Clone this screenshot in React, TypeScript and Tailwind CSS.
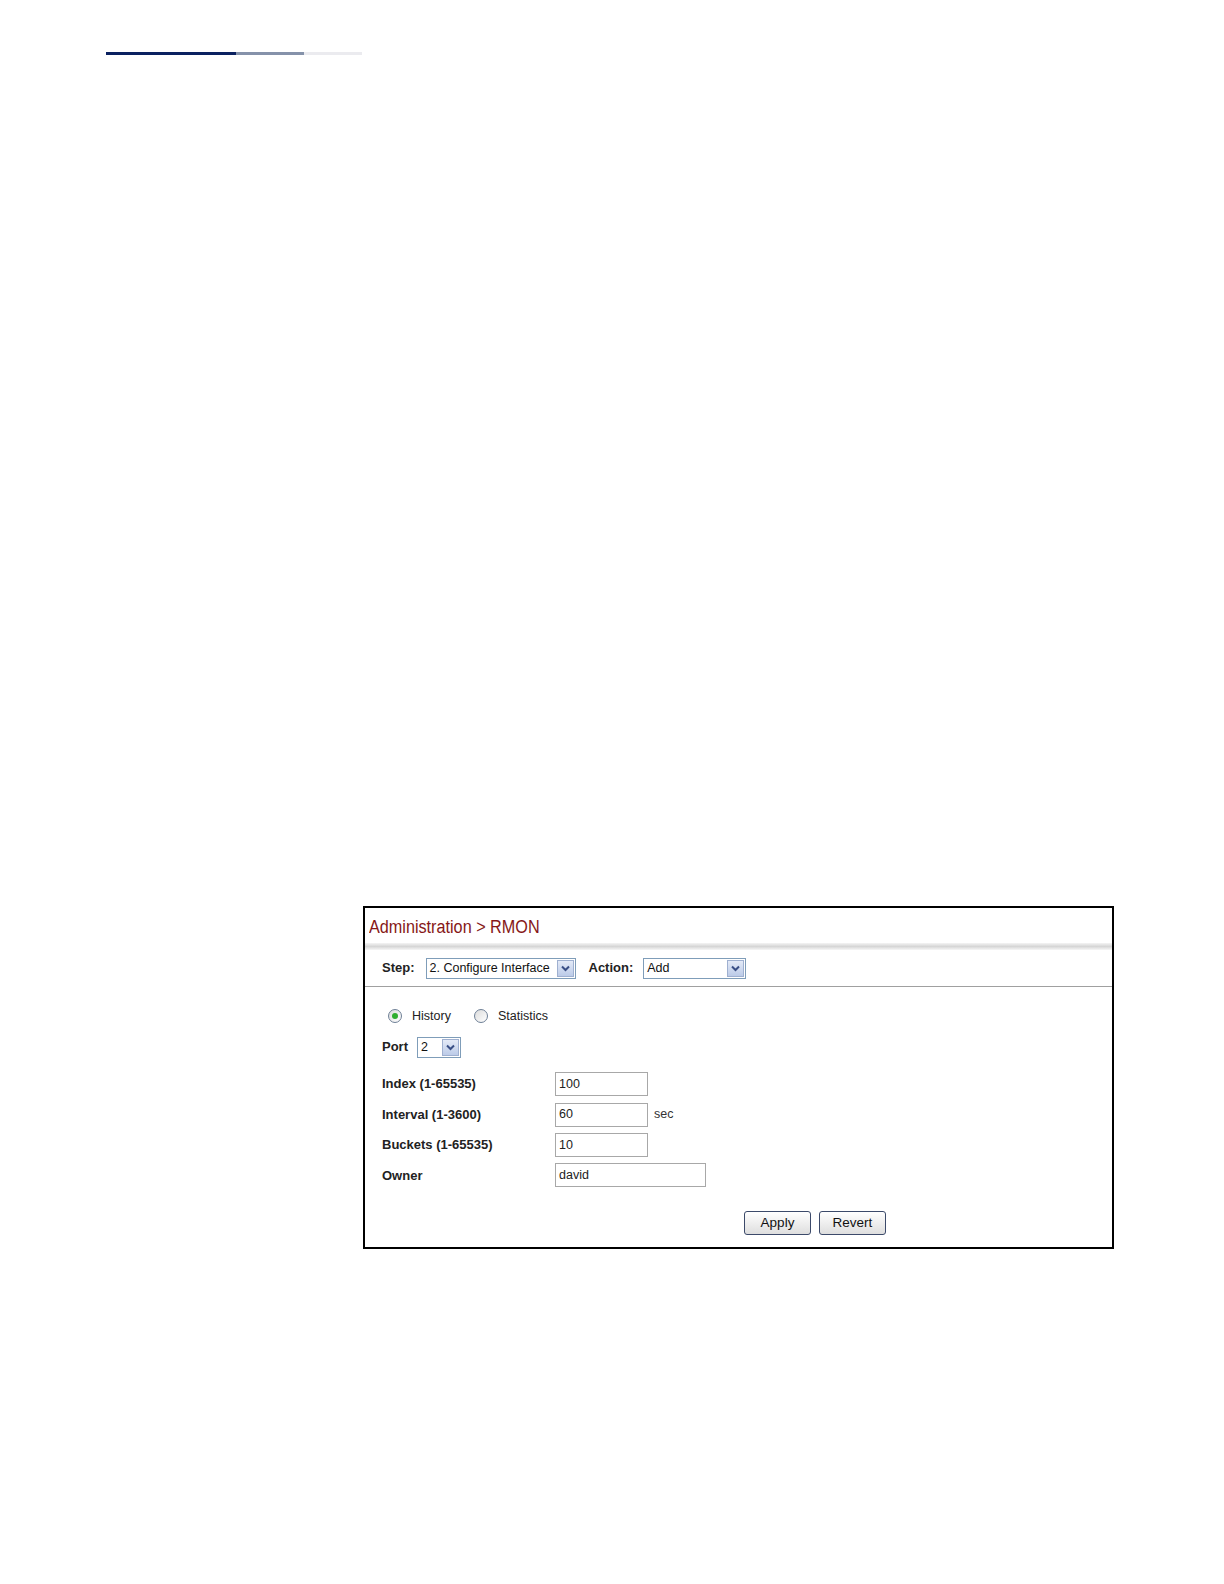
import React from 'react';

const font = { fontFamily: '"Liberation Sans", Arial, sans-serif' };

const Chevron: React.FC = () => (
  <span className="flex h-[17px] w-[17px] items-center justify-center border border-[#9fb0d0] bg-gradient-to-b from-[#e4eaf7] to-[#bccbe8]">
    <svg width="9" height="7" viewBox="0 0 9 7">
      <path d="M1 1.5 L4.5 5 L8 1.5" fill="none" stroke="#3a4f86" strokeWidth="2" />
    </svg>
  </span>
);

const Select: React.FC<{ value: string; width: string }> = ({ value, width }) => (
  <div className={`flex h-[21px] items-center justify-between border border-[#7f9db9] bg-white pl-[3px] pr-[1px] ${width}`}>
    <span className="text-[12.5px] leading-none text-[#111]">{value}</span>
    <Chevron />
  </div>
);

const Radio: React.FC<{ checked?: boolean; label: string }> = ({ checked, label }) => (
  <div className="flex items-center gap-[10px]">
    <span className="flex h-[14px] w-[14px] items-center justify-center rounded-full border border-[#6e7f96] bg-gradient-to-br from-[#dcdcdc] to-white">
      {checked && <span className="h-[6px] w-[6px] rounded-full bg-[#2fae2f]" />}
    </span>
    <span className="text-[12.5px] text-[#222]">{label}</span>
  </div>
);

const Field: React.FC<{ label: string; value: string; wide?: boolean; suffix?: string }> = ({ label, value, wide, suffix }) => (
  <div className="flex h-[30.4px] items-center">
    <span className="w-[173px] text-[13px] font-bold text-[#222]">{label}</span>
    <div className={`flex h-[24px] items-center border border-[#a8a8a8] bg-white pl-[3px] text-[12.5px] text-[#222] ${wide ? 'w-[151px]' : 'w-[93px]'}`}>
      {value}
    </div>
    {suffix && <span className="ml-[6px] text-[12.5px] text-[#333]">{suffix}</span>}
  </div>
);

const Button: React.FC<{ label: string }> = ({ label }) => (
  <div className="flex h-[24px] w-[67px] items-center justify-center rounded-[3px] border border-[#3c4a6a] bg-gradient-to-b from-white to-[#dedede] text-[13.5px] text-[#111]">
    {label}
  </div>
);

export default function App() {
  return (
    <div className="w-full bg-white pb-[40px]" style={font}>
      <div className="flex pl-[106px] pt-[52px]">
        <div className="h-[3px] w-[130px] bg-[#0b2160]" />
        <div className="h-[3px] w-[68px] bg-[#8592aa]" />
        <div className="h-[3px] w-[58px] bg-[#ebebef]" />
      </div>

      <div className="ml-[363px] mt-[851px] h-[343px] w-[751px] border-2 border-black">
        <div className="px-[4px] pt-[8px]">
          <div className="h-[20px] whitespace-nowrap">
            <span className="inline-block origin-left scale-x-[0.9] text-[18px] leading-[20px] text-[#861717]">
              Administration &gt; RMON
            </span>
          </div>
        </div>
        <div className="mt-[7px] h-[7px] bg-gradient-to-b from-[#f4f4f4] via-[#d6d6d6] to-[#f7f7f7]" />
        <div className="flex h-[37px] items-center border-b border-[#a0a0a0] pl-[17px]">
          <span className="mr-[11px] text-[13px] font-bold text-[#222]">Step:</span>
          <Select value="2. Configure Interface" width="w-[150px]" />
          <span className="ml-[13px] mr-[10px] text-[13px] font-bold text-[#222]">Action:</span>
          <Select value="Add" width="w-[103px]" />
        </div>

        <div className="pl-[17px]">
          <div className="mt-[14px] flex h-[30px] items-center gap-[23px] pl-[6px]">
            <Radio checked label="History" />
            <Radio label="Statistics" />
          </div>
          <div className="mt-[5px] flex h-[22px] items-center">
            <span className="mr-[9px] text-[13px] font-bold text-[#222]">Port</span>
            <Select value="2" width="w-[44px]" />
          </div>
          <div className="mt-[11px]">
            <Field label="Index (1-65535)" value="100" />
            <Field label="Interval (1-3600)" value="60" suffix="sec" />
            <Field label="Buckets (1-65535)" value="10" />
            <Field label="Owner" value="david" wide />
          </div>
          <div className="mt-[20.5px] flex gap-[8px] pl-[362px]">
            <Button label="Apply" />
            <Button label="Revert" />
          </div>
        </div>
      </div>
    </div>
  );
}
